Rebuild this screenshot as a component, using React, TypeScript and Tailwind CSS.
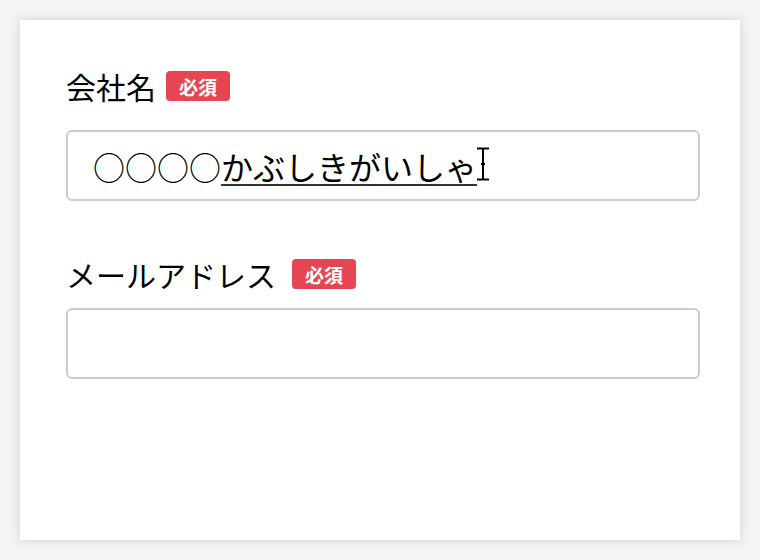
import React from 'react';

const font = { fontFamily: '"Noto Sans CJK JP", "Noto Sans", sans-serif' };

function Badge() {
  return (
    <span className="flex h-[30px] w-[64px] items-center justify-center rounded-[4px] bg-[#e64552] text-[19px] font-bold leading-none text-white">
      必須
    </span>
  );
}

function Cursor() {
  return (
    <svg className="absolute left-[455px] top-[127px]" width="16" height="34" viewBox="0 0 16 34">
      <path d="M2 1.5h12M8 1.5v31M2 32.5h12M6 17h4" stroke="#000" strokeWidth="2" fill="none" />
    </svg>
  );
}

export default function App() {
  return (
    <div className="h-[560px] w-[760px] bg-[#f4f4f4] p-5" style={font}>
      <div className="relative h-[520px] w-[720px] bg-white px-[46px] pt-[51px] shadow-[0_0_10px_rgba(0,0,0,0.15)]">
        <div className="flex h-[30px] items-center gap-[10px]">
          <span className="text-[30px] leading-none text-black">会社名</span>
          <Badge />
        </div>
        <div className="mt-[29px] flex h-[71px] w-[634px] items-center rounded-[6px] border-2 border-[#cccccc] pl-[25px]">
          <span className="text-[32px] leading-none text-black">
            ○○○○<span className="underline decoration-[1.5px] decoration-[#333333] underline-offset-[4px]">かぶしきがいしゃ</span>
          </span>
        </div>
        <div className="mt-[58px] flex h-[30px] items-center gap-[16px]">
          <span className="text-[30px] leading-none text-black">メールアドレス</span>
          <Badge />
        </div>
        <div className="mt-[19px] h-[71px] w-[634px] rounded-[6px] border-2 border-[#cccccc]" />
        <Cursor />
      </div>
    </div>
  );
}
